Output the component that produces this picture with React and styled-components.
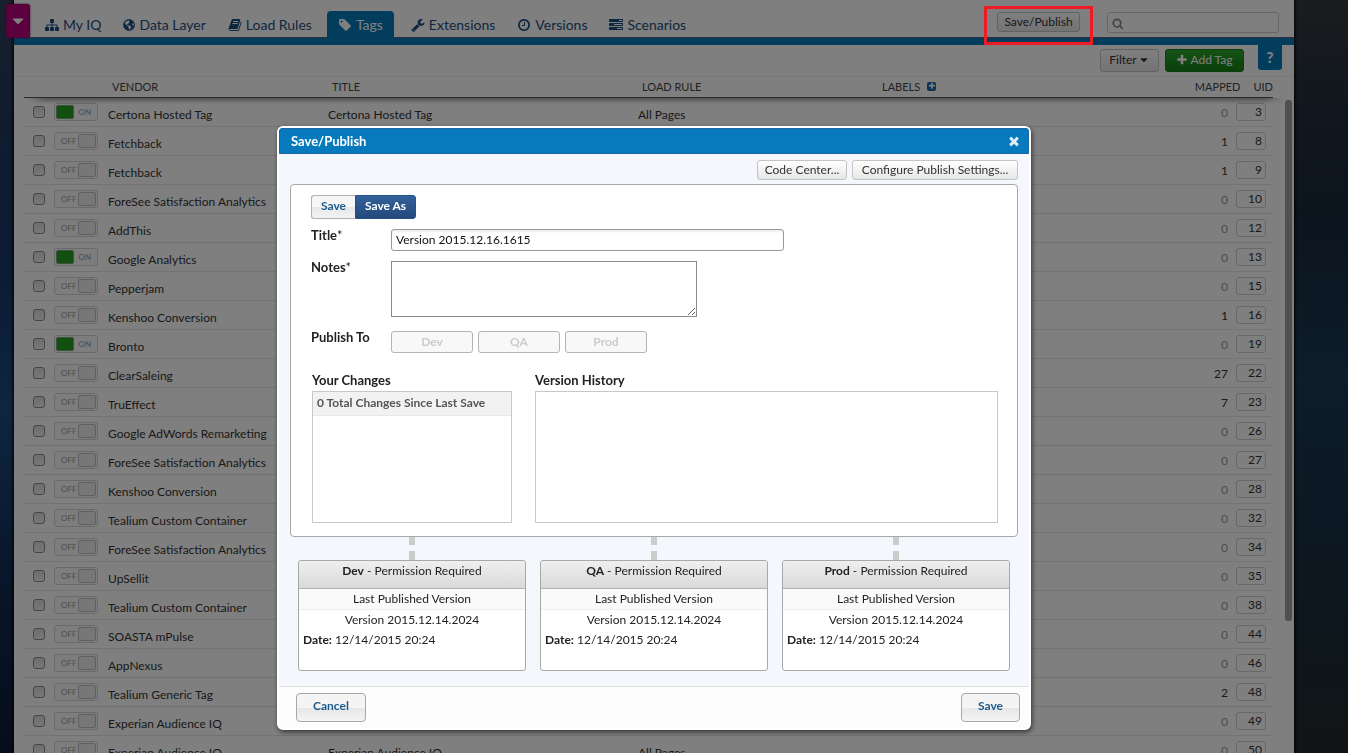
/* eslint-disable react/prop-types */
import { useState } from "react";
import styled, { createGlobalStyle, css } from "styled-components";
import { FaGlobeAmericas } from "react-icons/fa";

const icons = {
  sitemap:
    "M1792 1248v320q0 40-28 68t-68 28h-320q-40 0-68-28t-28-68v-320q0-40 28-68t68-28h96v-192h-512v192h96q40 0 68 28t28 68v320q0 40-28 68t-68 28h-320q-40 0-68-28t-28-68v-320q0-40 28-68t68-28h96v-192h-512v192h96q40 0 68 28t28 68v320q0 40-28 68t-68 28h-320q-40 0-68-28t-28-68v-320q0-40 28-68t68-28h96v-192q0-52 38-90t90-38h512v-192h-96q-40 0-68-28t-28-68v-320q0-40 28-68t68-28h320q40 0 68 28t28 68v320q0 40-28 68t-68 28h-96v192h512q52 0 90 38t38 90v192h96q40 0 68 28t28 68z",
  book: "M1703 478q40 57 18 129l-275 906q-19 64-76.5 107.5t-122.5 43.5h-923q-77 0-148.5-53.5t-99.5-131.5q-24-67-2-127 0-4 3-27t4-37q1-8-3-21.5t-3-19.5q2-11 8-21t16.5-23.5 16.5-23.5q23-38 45-91.5t30-91.5q3-10 .5-30t-.5-28q3-11 17-28t17-23q21-36 42-92t25-90q1-9-2.5-32t.5-28q4-13 22-30.5t22-22.5q19-26 42.5-84.5t27.5-96.5q1-8-3-25.5t-2-26.5q2-8 9-18t18-23 17-21q8-12 16.5-30.5t15-35 16-36 19.5-32 26.5-23.5 36-11.5 47.5 5.5l-1 3q38-9 51-9h761q74 0 114 56t18 130l-274 906q-36 119-71.5 153.5t-128.5 34.5h-869q-27 0-38 15-11 16-1 43 24 70 144 70h923q29 0 56-15.5t35-41.5l300-987q7-22 5-57 38 15 59 43zm-1064 2q-4 13 2 22.5t20 9.5h608q13 0 25.5-9.5t16.5-22.5l21-64q4-13-2-22.5t-20-9.5h-608q-13 0-25.5 9.5t-16.5 22.5zm-83 256q-4 13 2 22.5t20 9.5h608q13 0 25.5-9.5t16.5-22.5l21-64q4-13-2-22.5t-20-9.5h-608q-13 0-25.5 9.5t-16.5 22.5z",
  tag: "M576 448q0-53-37.5-90.5t-90.5-37.5-90.5 37.5-37.5 90.5 37.5 90.5 90.5 37.5 90.5-37.5 37.5-90.5zm1067 576q0 53-37 90l-491 492q-39 37-91 37-53 0-90-37l-715-716q-38-37-64.5-101t-26.5-117v-416q0-52 38-90t90-38h416q53 0 117 26.5t102 64.5l715 714q37 39 37 91z",
  wrench:
    "M448 1472q0-26-19-45t-45-19-45 19-19 45 19 45 45 19 45-19 19-45zm644-420l-682 682q-37 37-90 37-52 0-91-37l-106-108q-38-36-38-90 0-53 38-91l681-681q39 98 114.5 173.5t173.5 114.5zm634-435q0 39-23 106-47 134-164.5 217.5t-258.5 83.5q-185 0-316.5-131.5t-131.5-316.5 131.5-316.5 316.5-131.5q58 0 121.5 16.5t107.5 46.5q16 11 16 28t-16 28l-293 169v224l193 107q5-3 79-48.5t135.5-81 70.5-35.5q15 0 23.5 10t8.5 25z",
  clock:
    "M1024 544v448q0 14-9 23t-23 9h-320q-14 0-23-9t-9-23v-64q0-14 9-23t23-9h224v-352q0-14 9-23t23-9h64q14 0 23 9t9 23zm416 352q0-148-73-273t-198-198-273-73-273 73-198 198-73 273 73 273 198 198 273 73 273-73 198-198 73-273zm224 0q0 209-103 385.5t-279.5 279.5-385.5 103-385.5-103-279.5-279.5-103-385.5 103-385.5 279.5-279.5 385.5-103 385.5 103 279.5 279.5 103 385.5z",
  tasks:
    "M1024 1408h640v-128h-640v128zm-384-512h1024v-128h-1024v128zm640-512h384v-128h-384v128zm512 832v256q0 26-19 45t-45 19h-1664q-26 0-45-19t-19-45v-256q0-26 19-45t45-19h1664q26 0 45 19t19 45zm0-512v256q0 26-19 45t-45 19h-1664q-26 0-45-19t-19-45v-256q0-26 19-45t45-19h1664q26 0 45 19t19 45zm0-512v256q0 26-19 45t-45 19h-1664q-26 0-45-19t-19-45v-256q0-26 19-45t45-19h1664q26 0 45 19t19 45z",
  search:
    "M1216 832q0-185-131.5-316.5t-316.5-131.5-316.5 131.5-131.5 316.5 131.5 316.5 316.5 131.5 316.5-131.5 131.5-316.5zm512 832q0 52-38 90t-90 38q-54 0-90-38l-343-342q-179 124-399 124-143 0-273.5-55.5t-225-150-150-225-55.5-273.5 55.5-273.5 150-225 225-150 273.5-55.5 273.5 55.5 225 150 150 225 55.5 273.5q0 220-124 399l343 343q37 37 37 90z",
  plus: "M1600 736v192q0 40-28 68t-68 28h-416v416q0 40-28 68t-68 28h-192q-40 0-68-28t-28-68v-416h-416q-40 0-68-28t-28-68v-192q0-40 28-68t68-28h416v-416q0-40 28-68t68-28h192q40 0 68 28t28 68v416h416q40 0 68 28t28 68z",
  times:
    "M1490 1322q0 40-28 68l-136 136q-28 28-68 28t-68-28l-294-294-294 294q-28 28-68 28t-68-28l-136-136q-28-28-28-68t28-68l294-294-294-294q-28-28-28-68t28-68l136-136q28-28 68-28t68 28l294 294 294-294q28-28 68-28t68 28l136 136q28 28 28 68t-28 68l-294 294 294 294q28 28 28 68z",
  caret: "M1408 704q0 26-19 45l-448 448q-19 19-45 19t-45-19l-448-448q-19-19-19-45t19-45 45-19h896q26 0 45 19t19 45z",
};

const Icon = ({ name, size = 14 }) => (
  <svg width={size} height={size} viewBox="0 0 1792 1792" fill="currentColor" aria-hidden="true">
    <path d={icons[name]} />
  </svg>
);

const tabs = [
  { label: "My IQ", icon: "sitemap" },
  { label: "Data Layer" },
  { label: "Load Rules", icon: "book" },
  { label: "Tags", icon: "tag" },
  { label: "Extensions", icon: "wrench" },
  { label: "Versions", icon: "clock" },
  { label: "Scenarios", icon: "tasks" },
];

const vendors = [
  { name: "Certona Hosted Tag", mapped: 0, uid: 3, on: true },
  { name: "Fetchback", mapped: 1, uid: 8 },
  { name: "Fetchback", mapped: 1, uid: 9 },
  { name: "ForeSee Satisfaction Analytics", mapped: 0, uid: 10 },
  { name: "AddThis", mapped: 0, uid: 12 },
  { name: "Google Analytics", mapped: 0, uid: 13, on: true },
  { name: "Pepperjam", mapped: 0, uid: 15 },
  { name: "Kenshoo Conversion", mapped: 1, uid: 16 },
  { name: "Bronto", mapped: 0, uid: 19, on: true },
  { name: "ClearSaleing", mapped: 27, uid: 22 },
  { name: "TruEffect", mapped: 7, uid: 23 },
  { name: "Google AdWords Remarketing", mapped: 0, uid: 26 },
  { name: "ForeSee Satisfaction Analytics", mapped: 0, uid: 27 },
  { name: "Kenshoo Conversion", mapped: 0, uid: 28 },
  { name: "Tealium Custom Container", mapped: 0, uid: 32 },
  { name: "ForeSee Satisfaction Analytics", mapped: 0, uid: 34 },
  { name: "UpSellit", mapped: 0, uid: 35 },
  { name: "Tealium Custom Container", mapped: 0, uid: 38 },
  { name: "SOASTA mPulse", mapped: 0, uid: 44 },
  { name: "AppNexus", mapped: 0, uid: 46 },
  { name: "Tealium Generic Tag", mapped: 2, uid: 48 },
  { name: "Experian Audience IQ", mapped: 0, uid: 49 },
  { name: "Experian Audience IQ", mapped: 0, uid: 50 },
];

const environments = ["Dev", "QA", "Prod"];

const TagRow = ({ tag }) => {
  const [on, setOn] = useState(Boolean(tag.on));

  return (
    <tr>
      <Cell>
        <CheckBox type="checkbox" aria-label={`Select ${tag.name}`} />
      </Cell>
      <Cell>
        <Toggle type="button" role="switch" aria-checked={on} aria-label={tag.name} $on={on} onClick={() => setOn(!on)}>
          {on ? "ON" : "OFF"}
          <Knob $on={on} />
        </Toggle>
      </Cell>
      <NameCell>{tag.name}</NameCell>
      <NameCell>{tag.name}</NameCell>
      <NameCell>All Pages</NameCell>
      <Cell />
      <MappedCell $empty={tag.mapped === 0}>{tag.mapped}</MappedCell>
      <Cell>
        <Uid>{tag.uid}</Uid>
      </Cell>
    </tr>
  );
};

const SavePublishDialog = () => {
  const [title, setTitle] = useState("Version 2015.12.16.1615");
  const [notes, setNotes] = useState("");

  return (
    <Dialog role="dialog" aria-modal="true" aria-labelledby="dialog-title">
      <DialogHeader>
        <DialogTitle id="dialog-title">Save/Publish</DialogTitle>
        <CloseButton type="button" aria-label="Close">
          <Icon name="times" size={14} />
        </CloseButton>
      </DialogHeader>
      <DialogBody>
        <Actions>
          <SmallButton type="button" $minWidth={90}>
            Code Center...
          </SmallButton>
          <SmallButton type="button" $minWidth={166}>
            Configure Publish Settings...
          </SmallButton>
        </Actions>
        <Panel>
          <Segments>
            <Segment type="button">Save</Segment>
            <Segment type="button" $active>
              Save As
            </Segment>
          </Segments>
          <Fields>
            <Label htmlFor="version-title">
              Title<Star>*</Star>
            </Label>
            <TitleInput id="version-title" value={title} onChange={(e) => setTitle(e.target.value)} />
            <Label htmlFor="version-notes">
              Notes<Star>*</Star>
            </Label>
            <Notes id="version-notes" value={notes} onChange={(e) => setNotes(e.target.value)} />
            <Label as="span">Publish To</Label>
            <Targets>
              {environments.map((env) => (
                <Target key={env} type="button" disabled>
                  {env}
                </Target>
              ))}
            </Targets>
          </Fields>
          <Lists>
            <div>
              <ListTitle>Your Changes</ListTitle>
              <ListBox>
                <ListRow>0 Total Changes Since Last Save</ListRow>
              </ListBox>
            </div>
            <div>
              <ListTitle>Version History</ListTitle>
              <ListBox />
            </div>
          </Lists>
        </Panel>
        <Cards>
          {environments.map((env) => (
            <CardColumn key={env}>
              <Connector />
              <Card>
                <CardHeader>
                  <b>{env}</b> - Permission Required
                </CardHeader>
                <CardSubtitle>Last Published Version</CardSubtitle>
                <CardVersion>Version 2015.12.14.2024</CardVersion>
                <CardDate>
                  <b>Date:</b> 12/14/2015 20:24
                </CardDate>
              </Card>
            </CardColumn>
          ))}
        </Cards>
      </DialogBody>
      <DialogFooter>
        <FooterButton type="button">Cancel</FooterButton>
        <FooterButton type="button">Save</FooterButton>
      </DialogFooter>
    </Dialog>
  );
};

const App = () => {
  return (
    <Page>
      <GlobalStyle />
      <Shell>
        <ProfileButton type="button" aria-label="Open profile menu">
          <Icon name="caret" size={18} />
        </ProfileButton>
        <TopBar>
          <Tabs>
            {tabs.map(({ label, icon }) => (
              <Tab key={label} href="#" $active={label === "Tags"}>
                {icon ? <Icon name={icon} /> : <FaGlobeAmericas size={12} />}
                {label}
              </Tab>
            ))}
          </Tabs>
          <Highlighted>
            <PublishButton type="button">Save/Publish</PublishButton>
          </Highlighted>
          <Search>
            <Icon name="search" size={13} />
            <SearchInput type="search" aria-label="Search" />
          </Search>
        </TopBar>
        <Toolbar>
          <FilterButton type="button">
            Filter <Icon name="caret" size={12} />
          </FilterButton>
          <AddButton type="button">
            <Icon name="plus" size={12} /> Add Tag
          </AddButton>
          <HelpButton type="button">?</HelpButton>
        </Toolbar>
        <TableArea>
          <Table>
            <colgroup>
              <Col $w={30} />
              <Col $w={50} />
              <Col $w={220} />
              <Col $w={310} />
              <Col $w={240} />
              <Col />
              <Col $w={60} />
              <Col $w={44} />
            </colgroup>
            <thead>
              <tr>
                <HeadCell />
                <HeadCell />
                <HeadCell>VENDOR</HeadCell>
                <HeadCell>TITLE</HeadCell>
                <HeadCell>LOAD RULE</HeadCell>
                <HeadCell>
                  <LabelsHead>
                    LABELS
                    <LabelAdd type="button" aria-label="Add label">
                      <Icon name="plus" size={8} />
                    </LabelAdd>
                  </LabelsHead>
                </HeadCell>
                <HeadCell colSpan={2}>
                  <CountHead>
                    <span>MAPPED</span>
                    <span>UID</span>
                  </CountHead>
                </HeadCell>
              </tr>
            </thead>
            <tbody>
              {vendors.map((tag) => (
                <TagRow key={tag.uid} tag={tag} />
              ))}
            </tbody>
          </Table>
          <HeadShadow />
          <ScrollThumb />
        </TableArea>
      </Shell>
      <Overlay>
        <SavePublishDialog />
      </Overlay>
    </Page>
  );
};

export default App;

const GlobalStyle = createGlobalStyle`
  * {
    box-sizing: border-box;
  }
  body {
    margin: 0;
    overflow: hidden;
    font-family: Lato, "Noto Sans", sans-serif;
    font-size: 12px;
    color: #222;
  }
  button, input, textarea {
    font-family: inherit;
    font-size: inherit;
    color: inherit;
  }
  button {
    padding: 0;
    cursor: pointer;
  }
`;

const flexCenter = css`
  display: flex;
  align-items: center;
  justify-content: center;
`;

const Page = styled.div`
  height: 100vh;
  padding: 0 54px 0 14px;
  overflow: hidden;
  background:
    linear-gradient(#36393e 0, #25303c 12%, #18293c 28%, #1a3a54 50%, #193046 70%, #1c2c34 88%, #24292e 100%) right /
      54px 100% no-repeat,
    linear-gradient(#33415a 0, #22385c 15%, #173666 35%, #1d4a80 55%, #122a50 78%, #0d1b35 100%);
`;

const Shell = styled.div`
  position: relative;
  display: flex;
  flex-direction: column;
  height: 100%;
  background: #fff;
  box-shadow: 0 0 3px 1px #000;
`;

const ProfileButton = styled.button`
  ${flexCenter}
  position: absolute;
  top: 4px;
  left: -8px;
  width: 24px;
  height: 34px;
  border: 1px solid #a0066e;
  border-radius: 3px;
  background: #b8007c;
  box-shadow: 0 0 2px #60003c;
  color: #fff;
`;

const TopBar = styled.header`
  display: flex;
  align-items: flex-end;
  height: 45px;
  padding-right: 15px;
  border-bottom: 7px solid #067abd;
  box-shadow: inset 0 -1px 0 #5c6570;
`;

const Tabs = styled.nav`
  display: flex;
  flex: 1;
  padding-left: 20px;
`;

const Tab = styled.a`
  display: flex;
  align-items: center;
  gap: 4px;
  height: 27px;
  margin: ${(props) => (props.$active ? "0 6px 0 4px" : "0")};
  padding: 0 11px;
  border-radius: 4px 4px 0 0;
  background: ${(props) => (props.$active ? "#067abd" : "transparent")};
  color: ${(props) => (props.$active ? "#fff" : "#1d4f80")};
  font-size: 14px;
  text-decoration: none;
`;

const raised = css`
  border: 1px solid #c4c4c4;
  border-radius: 3px;
  background: linear-gradient(#fff, #e6e6e6);
  color: #333;
`;

const Highlighted = styled.div`
  position: relative;
  align-self: flex-start;
  width: 109px;
  height: 39px;
  margin: 6px 14px 0 0;
  padding: 6px 13px;

  &::after {
    content: "";
    position: absolute;
    inset: 0;
    z-index: 3;
    border: 3px solid #ed1c24;
    pointer-events: none;
  }
`;

const PublishButton = styled.button`
  ${raised}
  display: block;
  width: 83px;
  height: 20px;
  padding-bottom: 2px;
`;

const Search = styled.label`
  display: flex;
  align-items: center;
  gap: 4px;
  width: 172px;
  height: 21px;
  margin-bottom: 5px;
  padding: 2px 0 0 4px;
  border: 1px solid #ccc;
  border-radius: 3px;
  color: #888;
`;

const SearchInput = styled.input`
  width: 100%;
  border: 0;
  outline: none;
  background: none;
`;

const Toolbar = styled.div`
  display: flex;
  justify-content: flex-end;
  gap: 6px;
  height: 32px;
  padding-right: 12px;
  border-bottom: 1px solid #eee;
`;

const FilterButton = styled.button`
  ${raised}
  ${flexCenter}
  gap: 1px;
  width: 59px;
  height: 23px;
  margin-top: 4px;
  padding-bottom: 2px;
`;

const AddButton = styled.button`
  ${flexCenter}
  gap: 2px;
  width: 79px;
  height: 23px;
  margin: 4px 8px 0 0;
  padding-bottom: 2px;
  border: 1px solid #1d7a1d;
  border-radius: 3px;
  background: linear-gradient(#2ba52b, #158015);
  color: #fff;
`;

const HelpButton = styled.button`
  ${flexCenter}
  width: 24px;
  height: 25px;
  padding-bottom: 2px;
  border: 0;
  border-radius: 0 0 3px 3px;
  background: #067abd;
  color: #fff;
  font-size: 15px;
  font-weight: 900;
`;

const TableArea = styled.div`
  position: relative;
  flex: 1;
  min-height: 0;
  padding: 0 21px 0 10px;
  overflow: hidden;
`;

const Table = styled.table`
  width: 100%;
  table-layout: fixed;
  border-collapse: separate;
  border-spacing: 0;
  color: #333;
`;

const Col = styled.col`
  width: ${(props) => (props.$w ? `${props.$w}px` : "auto")};
`;

const HeadCell = styled.th`
  height: 21px;
  padding: 0 0 2px 8px;
  border-bottom: 1px solid #555;
  color: #444;
  font-size: 11px;
  font-weight: 400;
  text-align: left;
  vertical-align: middle;
  white-space: nowrap;
`;

const LabelsHead = styled.span`
  display: flex;
  align-items: center;
  gap: 7px;
`;

const LabelAdd = styled.button`
  ${flexCenter}
  width: 9px;
  height: 9px;
  border: 0;
  border-radius: 2px;
  background: #1d64a8;
  color: #fff;
`;

const CountHead = styled.span`
  display: flex;
  justify-content: flex-end;
  gap: 13px;
`;

const HeadShadow = styled.div`
  position: absolute;
  top: 21px;
  left: 12px;
  right: 10px;
  height: 6px;
  background: linear-gradient(rgba(0, 0, 0, 0.35), transparent);
  mask-image: linear-gradient(90deg, transparent, #000 20px, #000 calc(100% - 20px), transparent);
`;

const Cell = styled.td`
  height: 29px;
  padding: 0;
  border-bottom: 1px solid #e6e6e6;
  vertical-align: middle;
  white-space: nowrap;
`;

const NameCell = styled(Cell)`
  padding: 5px 0 0 4px;
`;

const MappedCell = styled(Cell)`
  padding-right: 1px;
  color: ${(props) => (props.$empty ? "#999" : "#333")};
  text-align: right;
`;

const CheckBox = styled.input`
  display: block;
  appearance: none;
  width: 12px;
  height: 12px;
  margin: 0 0 0 9px;
  border: 1px solid #8c8c8c;
  border-radius: 3px;
  background: linear-gradient(#dcdcdc, #f0f0f0);
`;

const Toggle = styled.button`
  display: flex;
  flex-direction: ${(props) => (props.$on ? "row-reverse" : "row")};
  align-items: center;
  justify-content: space-between;
  width: 44px;
  height: 18px;
  padding: ${(props) => (props.$on ? "0 6px 0 1px" : "0 1px 0 6px")};
  border: 1px solid #d4d4d4;
  border-radius: 3px;
  background: #fbfbfb;
  color: #999;
  font-size: 8px;
`;

const Knob = styled.span`
  width: 18px;
  height: 14px;
  border: 1px solid ${(props) => (props.$on ? "#7aa67a" : "#c0c0c0")};
  border-radius: 2px;
  background: ${(props) => (props.$on ? "#23a023" : "#eee")};
`;

const Uid = styled.span`
  display: block;
  width: 30px;
  height: 18px;
  margin-left: 7px;
  padding-right: 3px;
  border: 1px solid #d0d0d0;
  border-radius: 3px;
  line-height: 16px;
  text-align: right;
`;

const ScrollThumb = styled.div`
  position: absolute;
  top: 23px;
  right: 2px;
  width: 7px;
  height: 521px;
  border-radius: 3px;
  background: #a0a0a0;
`;

const Overlay = styled.div`
  position: fixed;
  inset: 0;
  z-index: 2;
  display: flex;
  align-items: flex-start;
  justify-content: center;
  padding: 126px 54px 0 14px;
  background: rgba(0, 0, 0, 0.5);
`;

const Dialog = styled.section`
  width: 754px;
  border: 2px solid #fff;
  border-radius: 6px;
  background: #fdfdfd;
  box-shadow: 1px 2px 5px rgba(0, 0, 0, 0.6);
`;

const DialogHeader = styled.div`
  display: flex;
  align-items: center;
  justify-content: space-between;
  height: 26px;
  padding: 0 7px 0 11px;
  border: 1px solid #1f66a5;
  border-radius: 3px 3px 0 0;
  background: #067abd;
  color: #fff;
`;

const DialogTitle = styled.h1`
  margin: 0;
  font-size: 13px;
  font-weight: 700;
  line-height: 24px;
`;

const CloseButton = styled.button`
  ${flexCenter}
  border: 0;
  background: none;
  color: #dcebf5;
`;

const DialogBody = styled.div`
  padding: 6px 11px 15px;
  border-bottom: 1px solid #ddd;
  background: #f4f7fc;
`;

const Actions = styled.div`
  display: flex;
  justify-content: flex-end;
  gap: 5px;
  margin-bottom: 4px;
`;

const SmallButton = styled.button`
  ${raised}
  min-width: ${(props) => props.$minWidth}px;
  height: 20px;
  padding: 0 5px 2px;
  white-space: nowrap;
`;

const Panel = styled.div`
  padding: 10px 19px 13px 20px;
  border: 1px solid #a8a8a8;
  border-radius: 4px;
  background: #fff;
`;

const Segments = styled.div`
  display: flex;
  margin-bottom: 10px;
`;

const Segment = styled.button`
  height: 24px;
  padding: 0 9px 3px;
  border: 1px solid ${(props) => (props.$active ? "#24508a" : "#b0b0b0")};
  border-radius: ${(props) => (props.$active ? "0 3px 3px 0" : "3px 0 0 3px")};
  border-right-width: ${(props) => (props.$active ? "1px" : "0")};
  background: ${(props) =>
    props.$active ? "linear-gradient(#336199, #24497c)" : "linear-gradient(#f6f6f6 50%, #e8e8e8 51%, #f2f2f2)"};
  color: ${(props) => (props.$active ? "#fff" : "#1d5a8c")};
  font-weight: 700;
`;

const Fields = styled.div`
  display: grid;
  grid-template-columns: 80px 1fr;
  grid-template-rows: 22px 56px 22px;
  row-gap: 10px;
  margin-bottom: 23px;

  & > :nth-child(n + 5) {
    margin-top: 4px;
  }
`;

const Label = styled.label`
  font-size: 13px;
  font-weight: 700;
  line-height: 12px;
`;

const Star = styled.span`
  font-weight: 400;
`;

const TitleInput = styled.input`
  width: 393px;
  height: 22px;
  padding: 0 4px 2px;
  border: 1px solid #999;
  border-radius: 3px;
  outline: none;
  box-shadow: inset 0 2px 2px #eee;
  color: #111;
`;

const Notes = styled.textarea`
  width: 306px;
  height: 56px;
  border: 1px solid #8c8c8c;
  outline: none;
`;

const Targets = styled.div`
  display: flex;
  gap: 5px;
`;

const Target = styled.button`
  width: 82px;
  height: 22px;
  padding-bottom: 2px;
  border: 1px solid #b4b4b4;
  border-radius: 3px;
  background: #f8f8f8;
  color: #ccc;
  font-weight: 700;
`;

const Lists = styled.div`
  display: grid;
  grid-template-columns: 200px 1fr;
  gap: 23px;
  padding-left: 1px;
`;

const ListTitle = styled.h2`
  margin: 0 0 3px;
  font-size: 13px;
  font-weight: 700;
  line-height: 16px;
`;

const ListBox = styled.div`
  height: 132px;
  border: 1px solid #c8c8c8;
`;

const ListRow = styled.div`
  height: 24px;
  padding-left: 4px;
  border-bottom: 1px solid #e8e8e8;
  background: #f2f2f2;
  color: #555;
  font-weight: 700;
  line-height: 22px;
`;

const Cards = styled.div`
  display: grid;
  grid-template-columns: repeat(3, 1fr);
  gap: 14px;
  padding: 0 8px;
`;

const CardColumn = styled.div`
  display: flex;
  flex-direction: column;
`;

const Connector = styled.div`
  align-self: center;
  width: 6px;
  height: 23px;
  background: linear-gradient(#ccc 8px, transparent 8px, transparent 14px, #ccc 14px);
`;

const Card = styled.article`
  height: 111px;
  border: 1px solid #a8a8a8;
  border-radius: 3px;
  background: #fff;
`;

const CardHeader = styled.header`
  height: 28px;
  border-bottom: 1px solid #b4b4b4;
  border-radius: 3px 3px 0 0;
  background: linear-gradient(#efefef, #d9d9d9);
  line-height: 20px;
  text-align: center;
`;

const CardSubtitle = styled.div`
  height: 21px;
  border-bottom: 1px solid #eee;
  background: #fafafa;
  line-height: 20px;
  text-align: center;
`;

const CardVersion = styled.div`
  line-height: 20px;
  text-align: center;
`;

const CardDate = styled.div`
  padding-left: 4px;
  line-height: 20px;
`;

const DialogFooter = styled.footer`
  display: flex;
  justify-content: space-between;
  padding: 6px 9px 6px 17px;
  border-radius: 0 0 4px 4px;
`;

const FooterButton = styled.button`
  height: 29px;
  padding: 0 16px 4px;
  border: 1px solid #a8a8a8;
  border-radius: 4px;
  background: linear-gradient(#f4f4f4 50%, #e6e6e6 51%, #f4f4f4);
  color: #1d5a8c;
  font-weight: 700;
`;
